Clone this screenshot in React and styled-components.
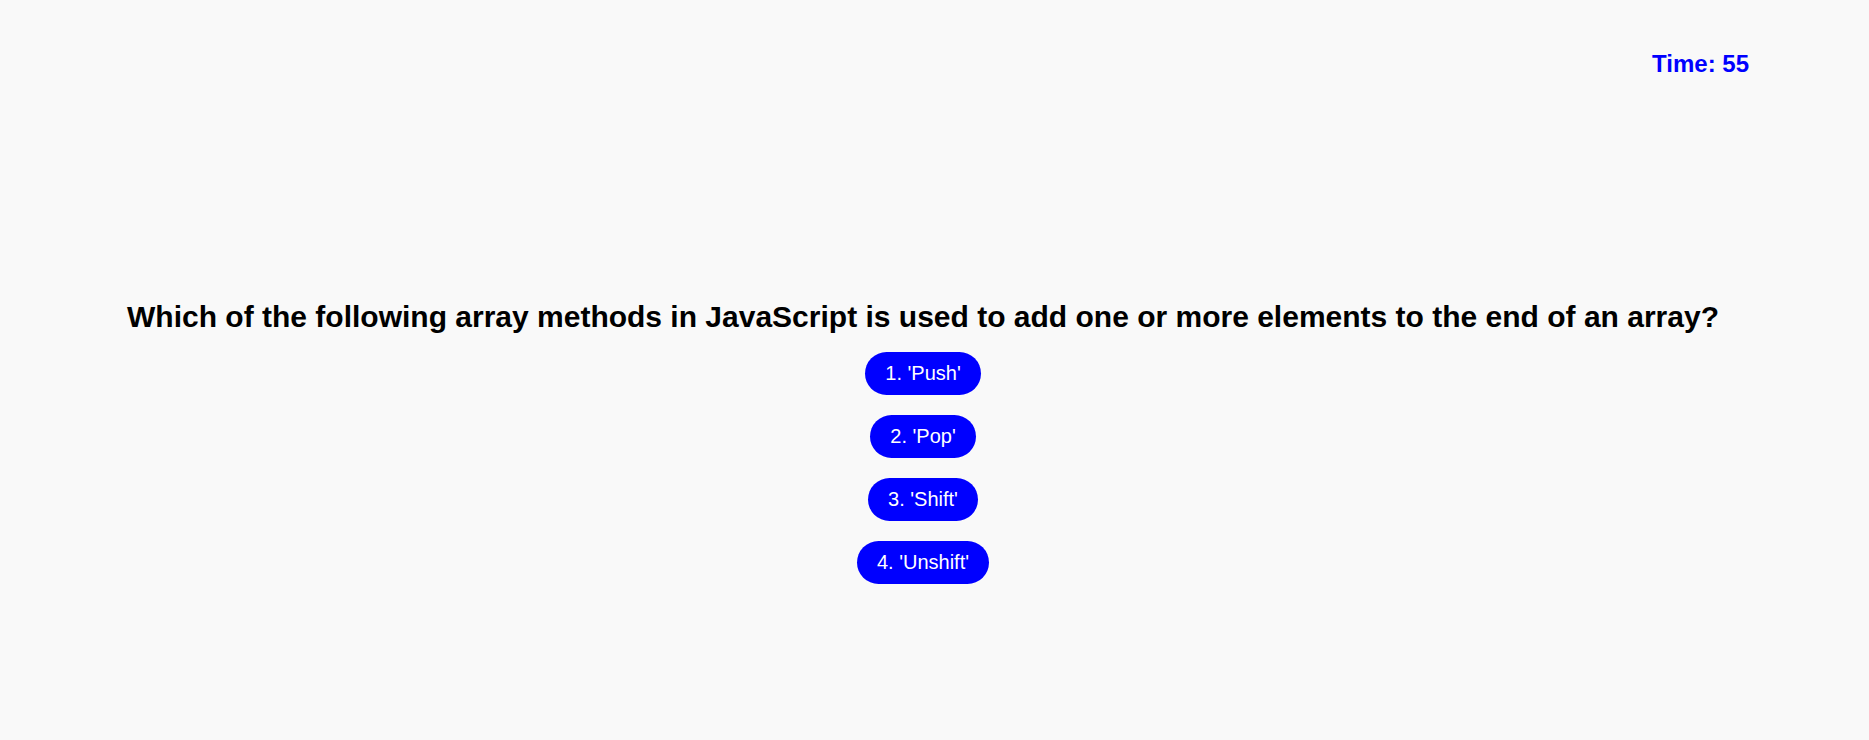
import React from 'react';
import styled, { createGlobalStyle } from 'styled-components';

const GlobalStyle = createGlobalStyle`
  html, body {
    margin: 0;
    padding: 0;
    background: #f9f9f9;
  }
  body {
    font-family: "Liberation Sans", Arial, sans-serif;
  }
`;

const Page = styled.div`
  min-height: 100vh;
  display: flex;
  flex-direction: column;
`;

const TopBar = styled.header`
  display: flex;
  justify-content: flex-end;
  padding: 50px 120px 0 0;
`;

const Timer = styled.div`
  color: #0000ff;
  font-size: 24px;
  font-weight: bold;
  line-height: 28px;
`;

const Quiz = styled.main`
  display: flex;
  flex-direction: column;
  align-items: center;
  padding: 222px 23px 0 0;
`;

const Question = styled.h2`
  margin: 0 0 18px;
  font-size: 30px;
  font-weight: bold;
  line-height: 34px;
  color: #000;
  text-align: center;
`;

const Options = styled.div`
  display: flex;
  flex-direction: column;
  align-items: center;
  gap: 20px;
`;

const OptionButton = styled.button`
  font-family: "Liberation Sans", Arial, sans-serif;
  font-size: 20px;
  line-height: 23px;
  color: #fff;
  background: #0000ff;
  border: none;
  border-radius: 22px;
  padding: 10px 20px;
  cursor: pointer;
`;

const options = ["'Push'", "'Pop'", "'Shift'", "'Unshift'"];

export default function App() {
  return (
    <Page>
      <GlobalStyle />
      <TopBar>
        <Timer>Time: 55</Timer>
      </TopBar>
      <Quiz>
        <Question>
          Which of the following array methods in JavaScript is used to add one or more elements to the end of an array?
        </Question>
        <Options>
          {options.map((opt, i) => (
            <OptionButton key={opt}>
              {i + 1}. {opt}
            </OptionButton>
          ))}
        </Options>
      </Quiz>
    </Page>
  );
}
